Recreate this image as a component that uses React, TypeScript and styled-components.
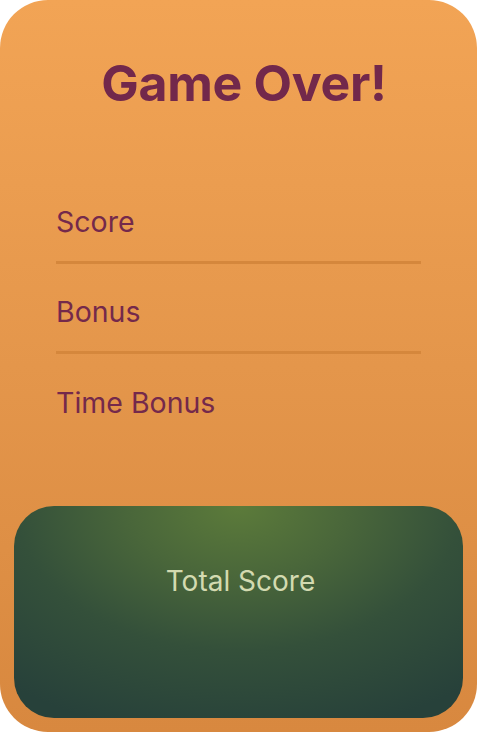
import React from 'react';
import styled, { createGlobalStyle } from 'styled-components';

const Global = createGlobalStyle`
  html, body {
    margin: 0;
    padding: 0;
    background: #ffffff;
  }
  body {
    font-family: Inter, "Noto Sans", sans-serif;
  }
`;

const Card = styled.div`
  width: 477px;
  height: 732px;
  box-sizing: border-box;
  border-radius: 48px;
  background: linear-gradient(180deg, #f2a455 0%, #e4964b 50%, #d8883f 100%);
  display: flex;
  flex-direction: column;
  padding: 0 14px 14px;
  overflow: hidden;
`;

const Title = styled.h1`
  margin: 53px 0 0;
  padding-left: 11px;
  text-align: center;
  font-size: 50px;
  line-height: 60px;
  font-weight: 700;
  color: #72284b;
  letter-spacing: -0.3px;
`;

const List = styled.div`
  display: flex;
  flex-direction: column;
  padding: 0 42px;
  margin-top: 61px;
`;

const Row = styled.div<{ $last?: boolean }>`
  height: 90px;
  box-sizing: border-box;
  display: flex;
  align-items: center;
  padding-top: 7px;
  border-bottom: ${(p) => (p.$last ? 'none' : '3px solid #d5873c')};
  font-size: 28.5px;
  color: #74294b;
`;

const Total = styled.div`
  margin-top: auto;
  height: 212px;
  border-radius: 40px;
  background: radial-gradient(
    ellipse 80% 110% at 50% 0%,
    #5c7b3a 0%,
    #4a673a 30%,
    #34503a 62%,
    #27413a 100%
  );
  display: flex;
  justify-content: center;
  padding: 58px 0 0 4px;
  box-sizing: border-box;
  font-size: 28px;
  color: #d3dab0;
`;

export default function App() {
  return (
    <>
      <Global />
      <Card>
        <Title>Game Over!</Title>
        <List>
          <Row>Score</Row>
          <Row>Bonus</Row>
          <Row $last>Time Bonus</Row>
        </List>
        <Total>Total Score</Total>
      </Card>
    </>
  );
}
